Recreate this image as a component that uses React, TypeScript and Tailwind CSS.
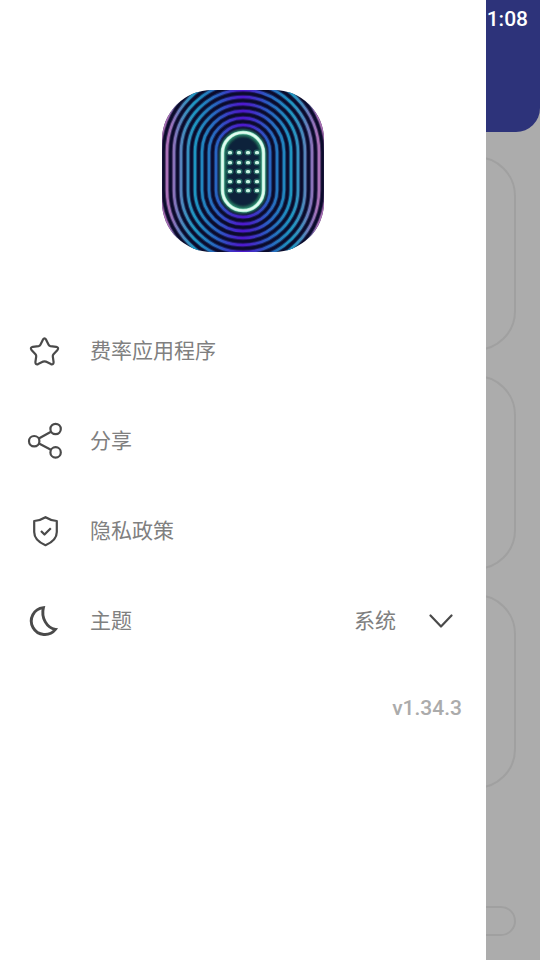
import { useState } from "react";

const rings = [27, 34, 41, 48, 55, 62, 69, 76, 83, 90, 97];
const dotRows = [62, 72, 81, 91, 100];
const dotCols = [68, 77, 86, 95];

const Logo = () => (
  <svg viewBox="0 0 162 162" className="w-[162px] h-[162px] rounded-[50px]" role="img" aria-label="logo">
    <defs>
      <linearGradient id="ring" gradientUnits="userSpaceOnUse" x1="0" y1="0" x2="162" y2="0">
        <stop offset="0" stopColor="#b878c0" />
        <stop offset="0.04" stopColor="#b478c2" />
        <stop offset="0.08" stopColor="#8c7ac4" />
        <stop offset="0.13" stopColor="#4c92c6" />
        <stop offset="0.2" stopColor="#1fa0cc" />
        <stop offset="0.28" stopColor="#2582c8" />
        <stop offset="0.35" stopColor="#2c62cc" />
        <stop offset="0.43" stopColor="#4434d0" />
        <stop offset="0.5" stopColor="#5218d8" />
        <stop offset="0.57" stopColor="#4434d0" />
        <stop offset="0.65" stopColor="#2c62cc" />
        <stop offset="0.72" stopColor="#2582c8" />
        <stop offset="0.8" stopColor="#1fa0cc" />
        <stop offset="0.87" stopColor="#4c92c6" />
        <stop offset="0.92" stopColor="#8c7ac4" />
        <stop offset="0.96" stopColor="#b478c2" />
        <stop offset="1" stopColor="#b878c0" />
      </linearGradient>
      <filter id="glow" x="-30%" y="-30%" width="160%" height="160%">
        <feGaussianBlur stdDeviation="1.6" />
      </filter>
    </defs>
    <rect width="162" height="162" fill="#0b0b2c" />
    {rings.map((r) => (
      <g key={r} fill="none" stroke="url(#ring)">
        <rect x={81 - r} y={62 - r} width={r * 2} height={r * 2 + 38} rx={r} strokeWidth="4.4" opacity="0.35" />
        <rect x={81 - r} y={62 - r} width={r * 2} height={r * 2 + 38} rx={r} strokeWidth="2.5" opacity="0.9" />
      </g>
    ))}
    <rect x="60.5" y="42.5" width="41" height="78" rx="20.5" fill="#10203a" stroke="#2f8f72" strokeWidth="6" filter="url(#glow)" />
    <rect x="60.5" y="42.5" width="41" height="78" rx="20.5" fill="none" stroke="#9fe8cc" strokeWidth="3.6" />
    <rect x="60.5" y="42.5" width="41" height="78" rx="20.5" fill="none" stroke="#e2fbf0" strokeWidth="2.2" />
    {dotRows.map((y) =>
      dotCols.map((x) => (
        <g key={`${x}-${y}`}>
          <ellipse cx={x} cy={y + 0.5} rx="3.6" ry="3" fill="#2f8070" opacity="0.7" />
          <rect x={x - 2.1} y={y - 1} width="4.2" height="3.2" rx="1.5" fill="#c8f2e2" />
        </g>
      ))
    )}
  </svg>
);

const StarIcon = () => (
  <svg viewBox="0 0 36 36" className="w-9 h-9" fill="none" stroke="#4a4a4a" strokeWidth="2.2" strokeLinejoin="round">
    <path d="M15.9 6.7Q17.5 4.2 19.1 6.7L21.6 11.8Q22.1 12.9 23.4 13.1L29.2 13.8Q32.2 14.5 30.5 16.9L26.5 21.2Q25.6 22.2 25.8 23.5L26.6 29.2Q26.5 32 23.9 31.1L18.8 28.6Q17.5 28.1 16.2 28.6L11.1 31.1Q8.5 32 8.4 29.2L9.2 23.5Q9.4 22.2 8.5 21.2L4.5 16.9Q2.8 14.5 5.8 13.8L11.6 13.1Q12.9 12.9 13.4 11.8Z" />
  </svg>
);

const ShareIcon = () => (
  <svg viewBox="0 0 36 36" className="w-9 h-9 overflow-visible" fill="none" stroke="#4a4a4a" strokeWidth="2.2">
    <circle cx="7.2" cy="18.2" r="5.2" />
    <circle cx="28.6" cy="6" r="5.2" />
    <circle cx="28.6" cy="29.4" r="5.2" />
    <path d="M11.8 15.5l12.2-6.8M12 20.5l11.9 6.3" />
  </svg>
);

const ShieldIcon = () => (
  <svg viewBox="0 0 36 36" className="w-9 h-9" fill="none" stroke="#4a4a4a" strokeWidth="2.2" strokeLinejoin="round">
    <path d="M18.5 4.2q5.5 3.4 11.3 3.8v11q0 8.5-11.3 13.2q-11.3-4.7-11.3-13.2v-11q5.8-.4 11.3-3.8z" />
    <path d="M14 18l3.5 3.5 6.3-6.3" />
  </svg>
);

const MoonIcon = () => (
  <svg viewBox="0 0 36 36" className="w-9 h-9" fill="none" stroke="#4a4a4a" strokeWidth="2.9" strokeLinejoin="miter">
    <path d="M16.4 4.6A13.5 13.5 0 1 0 28.4 26.4C20 25 13.8 15 16.4 4.6z" />
  </svg>
);

const menu = [
  { label: "费率应用程序", Icon: StarIcon },
  { label: "分享", Icon: ShareIcon },
  { label: "隐私政策", Icon: ShieldIcon },
];

const App = () => {
  const [theme, setTheme] = useState("系统");

  return (
    <div className="relative flex min-h-screen flex-col bg-[#acacac] text-[21px] leading-[30px] font-[Roboto,'Noto_Sans_CJK_SC',sans-serif]">
      <header className="h-[132px] rounded-br-3xl bg-[#2d337a] px-3 pt-1 text-right font-medium text-white">
        1:08
      </header>
      <main className="flex flex-1 flex-col gap-6 p-6">
        <div className="h-[195px] rounded-[40px] border-2 border-[#a0a0a0]" />
        <div className="h-[195px] rounded-[40px] border-2 border-[#a0a0a0]" />
        <div className="h-[195px] rounded-[40px] border-2 border-[#a0a0a0]" />
        <div className="mt-auto h-[30px] rounded-full border-2 border-[#a0a0a0]" />
      </main>

      <aside className="absolute inset-y-0 left-0 w-9/10 bg-white text-[#808080]">
        <div className="flex justify-center pt-[90px] pb-[54px]">
          <Logo />
        </div>
        <nav>
          {menu.map(({ label, Icon }) => (
            <button key={label} type="button" className="flex h-[90px] w-full items-center gap-[27px] px-[27px] text-left">
              <Icon />
              <span>{label}</span>
            </button>
          ))}
        </nav>
        <div className="flex h-[90px] items-center gap-[27px] pr-6 pl-[27px]">
          <MoonIcon />
          <label htmlFor="theme">主题</label>
          <div className="relative ml-auto flex items-center">
            <select
              id="theme"
              value={theme}
              onChange={(e) => setTheme(e.target.value)}
              className="appearance-none bg-transparent pr-[66px]"
            >
              <option>系统</option>
              <option>浅色</option>
              <option>深色</option>
            </select>
            <svg viewBox="0 0 24 24" className="pointer-events-none absolute right-[9px] h-6 w-6" fill="none" stroke="#4a4a4a" strokeWidth="2.2" strokeLinecap="round" strokeLinejoin="round">
              <path d="M1.5 6.5L12 17.5L22.5 6.5" />
            </svg>
          </div>
        </div>
        <p className="mt-[27px] pr-6 text-right font-medium text-[#ababab]">v1.34.3</p>
      </aside>
    </div>
  );
};

export default App;
